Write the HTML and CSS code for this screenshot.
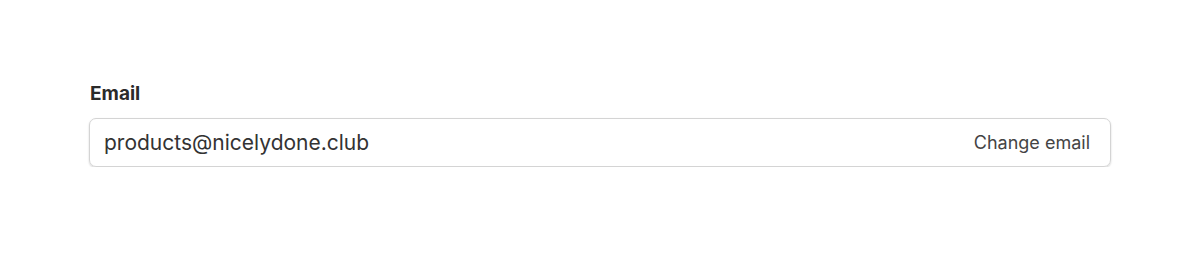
FILE: index.html
```html
<!DOCTYPE html>
<html>
<head>
<meta charset="utf-8">
<link rel="stylesheet" href="styles.css">
</head>
<body>
<div class="field">
  <label class="label">Email</label>
  <div class="input">
    <span class="value">products@nicelydone.club</span>
    <span class="action">Change email</span>
  </div>
</div>
</body>
</html>
```
FILE: styles.css
```css
html, body { margin: 0; padding: 0; background: #fff; }
body { font-family: Inter, "Noto Sans", sans-serif; color: #2b2b2b; }
.field { padding: 82px 89px 0 89px; display: flex; flex-direction: column; gap: 12px; }
.label { font-size: 19px; font-weight: 700; color: #2a2a2a; line-height: 24px; padding-left: 1px; }
.input {
  height: 49px; box-sizing: border-box; width: 1022px;
  border: 1px solid #d4d4d4; border-radius: 7px;
  box-shadow: 0 1px 2px rgba(0,0,0,0.18);
  display: flex; align-items: center; justify-content: space-between;
  padding: 0 20px 0 14px;
}
.value { font-size: 21px; color: #333; }
.action { font-size: 18px; color: #444; }
```
